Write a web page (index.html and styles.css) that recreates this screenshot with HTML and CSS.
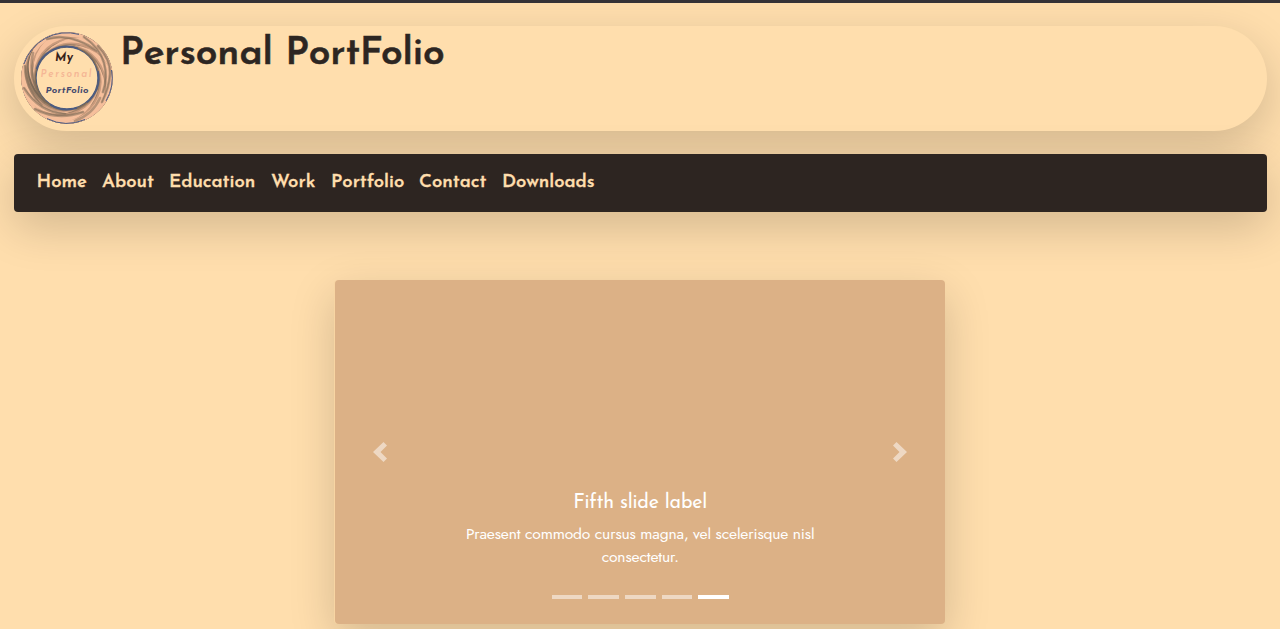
FILE: index.html
```html
<!DOCTYPE html>
<html lang="en">
<head>
<meta charset="utf-8">
<title>Personal PortFolio</title>
<link rel="stylesheet" href="styles.css">
</head>
<body>
<header class="header">
  <svg class="logo" viewBox="-46 -46 92 92" aria-label="My Personal PortFolio">
    <defs>
      <clipPath id="disc"><circle r="45.7"/></clipPath>
      <g id="arm">
        <path d="M-1-45.5A43.5 38.3 0 0 0 0 31.5A32.3 38.3 0 0 1 -1-45.5" fill="#7b6956"/>
        <path d="M-1.5-45.3A43.1 38.3 0 0 0 -.5 31.8A33.6 38.3 0 0 1 -1.5-45.3" fill="#9d7f66"/>
        <path d="M-2-45.1A42.8 38.3 0 0 0 -1 32.1A34.8 38.3 0 0 1 -2-45.1" fill="#c99a7c"/>
        <path d="M-3-44.9A42.5 38.3 0 0 0 -1.5 32.4A36 38.3 0 0 1 -3-44.9" fill="#f6bf9b"/>
      </g>
    </defs>
    <circle r="38" fill="none" stroke="#4b5b82" stroke-width="15.4"/>
    <g clip-path="url(#disc)">
      <use href="#arm" transform="rotate(20)"/>
      <use href="#arm" transform="rotate(71.4)"/>
      <use href="#arm" transform="rotate(122.8)"/>
      <use href="#arm" transform="rotate(174.2)"/>
      <use href="#arm" transform="rotate(225.6)"/>
      <use href="#arm" transform="rotate(277)"/>
      <use href="#arm" transform="rotate(328.4)"/>
    </g>
    <g fill="none" stroke="#7b6956" stroke-linecap="round" stroke-opacity=".5">
      <path d="M17-41Q33-30 37-15T36 14M31-32Q44-18 43-4T35 24M-20-39Q4-46 30-27M-42-12Q-42 10-25 28M-34-25Q-40 2-22 24M-43 10Q-28 34-2 36M-32 31Q-10 43 16 34M8 43Q26 36 33 20" stroke-width="2.6"/>
      <path d="M17-41Q33-30 37-15T36 14M31-32Q44-18 43-4T35 24M-20-39Q4-46 30-27M-42-12Q-42 10-25 28M-43 10Q-28 34-2 36M-32 31Q-10 43 16 34" stroke-width="1"/>
    </g>
    <g fill="none" stroke="#4b5b82">
      <path d="M-43-14A45.2 45.2 0 0 1 12-43.6M44.5-8A45.2 45.2 0 0 1 39 23M18 41.5A45.2 45.2 0 0 1-20 40.6" stroke-width="1"/>
      <path d="M-30.5-9A31.5 31.5 0 0 1 11-29.5M31-7A31.5 31.5 0 0 1 20 24.5M10 30A31.5 31.5 0 0 1-17 26.5" stroke-width="1.6"/>
    </g>
    <text class="logo-my" x="-12" y="-17.5" textLength="18">My</text>
    <text class="logo-personal" x="-26.5" y="-0.7" textLength="51">Personal</text>
    <text class="logo-portfolio" x="-21.5" y="15" textLength="43">PortFolio</text>
  </svg>
  <h1 class="title">Personal PortFolio</h1>
</header>
<nav class="nav">
  <a class="link">Home</a><a class="link">About</a><a class="link">Education</a><a class="link">Work</a><a class="link">Portfolio</a><a class="link">Contact</a><a class="link">Downloads</a>
</nav>
<main class="carousel">
  <div class="stage">
    <svg class="arrow" viewBox="0 0 14 20"><path d="M10.5 0L14 3.5 7.5 10 14 16.5 10.5 20 0 10z"/></svg>
    <svg class="arrow" viewBox="0 0 14 20"><path d="M3.5 0L0 3.5 6.5 10 0 16.5 3.5 20 14 10z"/></svg>
  </div>
  <div class="caption">
    <h5 class="label">Fifth slide label</h5>
    <p class="desc">Praesent commodo cursus magna, vel scelerisque nisl<br>consectetur.</p>
  </div>
  <div class="dots"><i class="dot"></i><i class="dot"></i><i class="dot"></i><i class="dot"></i><i class="dot active"></i></div>
</main>
</body>
</html>
```
FILE: styles.css
```css
* { box-sizing: border-box; }
html { overflow: hidden; }
body {
  margin: 0;
  height: 629px;
  overflow: hidden;
  padding: 23px 13px 0 13.5px;
  border-top: 3px solid #353235;
  background: #ffdead;
  font-family: "Josefin Sans", Lato, sans-serif;
}
.header {
  display: flex;
  height: 105px;
  padding: 6px 7.5px;
  border-radius: 52.5px;
  background: #ffdead;
  box-shadow: 0 15px 46px rgba(0, 0, 0, .175);
}
.logo { width: 92px; height: 92px; flex: none; }
.logo text { font-family: "Josefin Sans", Lato, sans-serif; font-style: italic; font-weight: 700; }
.logo-my { font-size: 12px; fill: #38231a; }
.logo .logo-personal { font-size: 10px; font-weight: 600; fill: #f5b695; }
.logo-portfolio { font-size: 9.5px; fill: #454a6d; }
.title {
  margin: -1px 0 0 7px;
  font-size: 39px;
  line-height: 48px;
  font-weight: 600;
  letter-spacing: -.13px;
  -webkit-text-stroke: .5px #2d2622;
  color: #2d2622;
  white-space: nowrap;
}
.nav {
  display: grid;
  grid-template-columns: 65.5px 67px 102px 60px 88px 83px auto;
  height: 57.5px;
  margin-top: 23px;
  padding: 16px 23px;
  border-radius: 4px;
  background: #2d2521;
  box-shadow: 0 15px 46px rgba(0, 0, 0, .175);
}
.link { font-size: 18.6px; line-height: 26px; font-weight: 600; letter-spacing: -.02px; -webkit-text-stroke: .3px #ffdead; color: #ffdead; }
.carousel {
  display: flex;
  flex-direction: column;
  width: 610px;
  height: 344px;
  margin: 68.5px auto 0;
  border-radius: 4px;
  background: #dcb186;
  box-shadow: -1px 0 0 #f8d5a3, 0 15px 46px rgba(0, 0, 0, .175);
}
.stage {
  display: flex;
  justify-content: space-between;
  padding: 162px 38px 0;
  height: 211px;
}
.arrow { width: 14px; height: 20px; fill: #eed8c3; }
.caption { text-align: center; color: #fff; }
.label { margin: 0; font-size: 19.6px; line-height: 25px; font-weight: 400; letter-spacing: -.18px; }
.desc { margin: 6px 0 0; font-family: Jost, "Josefin Sans", Lato, sans-serif; font-size: 15.6px; line-height: 23px; letter-spacing: -.13px; }
.dots { display: flex; justify-content: center; gap: 6px; margin-top: 27px; }
.dot { width: 30.6px; height: 4px; background: #eed8c3; }
.active { background: #fff; }
```
